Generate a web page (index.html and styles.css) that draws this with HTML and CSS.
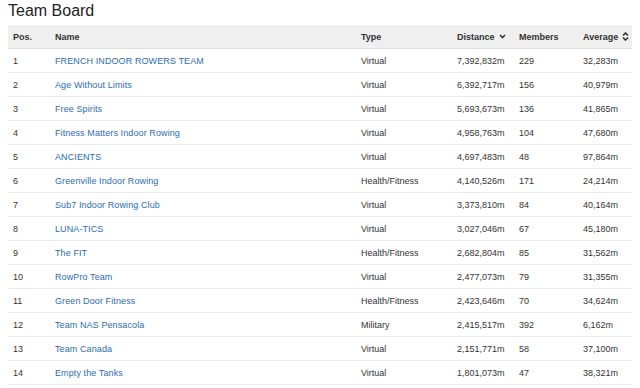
FILE: index.html
```html
<!DOCTYPE html>
<html>
<head>
<meta charset="utf-8">
<link rel="stylesheet" href="styles.css">
</head>
<body>
<h1 class="title">Team Board</h1>
<div class="board">
  <div class="row head">
    <div class="cell">Pos.</div>
    <div class="cell">Name</div>
    <div class="cell">Type</div>
    <div class="cell">Distance <svg class="ico" width="7" height="5" viewBox="0 0 7 5"><path d="M1 1 L3.5 3.5 L6 1" fill="none" stroke="#333" stroke-width="1.6"/></svg></div>
    <div class="cell">Members</div>
    <div class="cell">Average <svg class="ico" width="7" height="9" viewBox="0 0 7 9"><path d="M1 3.5 L3.5 1 L6 3.5 M1 5.5 L3.5 8 L6 5.5" fill="none" stroke="#333" stroke-width="1.6"/></svg></div>
  </div>
  <div class="row"><div class="cell">1</div><div class="cell"><a class="link">FRENCH INDOOR ROWERS TEAM</a></div><div class="cell">Virtual</div><div class="cell">7,392,832m</div><div class="cell">229</div><div class="cell">32,283m</div></div>
  <div class="row"><div class="cell">2</div><div class="cell"><a class="link">Age Without Limits</a></div><div class="cell">Virtual</div><div class="cell">6,392,717m</div><div class="cell">156</div><div class="cell">40,979m</div></div>
  <div class="row"><div class="cell">3</div><div class="cell"><a class="link">Free Spirits</a></div><div class="cell">Virtual</div><div class="cell">5,693,673m</div><div class="cell">136</div><div class="cell">41,865m</div></div>
  <div class="row"><div class="cell">4</div><div class="cell"><a class="link">Fitness Matters Indoor Rowing</a></div><div class="cell">Virtual</div><div class="cell">4,958,763m</div><div class="cell">104</div><div class="cell">47,680m</div></div>
  <div class="row"><div class="cell">5</div><div class="cell"><a class="link">ANCIENTS</a></div><div class="cell">Virtual</div><div class="cell">4,697,483m</div><div class="cell">48</div><div class="cell">97,864m</div></div>
  <div class="row"><div class="cell">6</div><div class="cell"><a class="link">Greenville Indoor Rowing</a></div><div class="cell">Health/Fitness</div><div class="cell">4,140,526m</div><div class="cell">171</div><div class="cell">24,214m</div></div>
  <div class="row"><div class="cell">7</div><div class="cell"><a class="link">Sub7 Indoor Rowing Club</a></div><div class="cell">Virtual</div><div class="cell">3,373,810m</div><div class="cell">84</div><div class="cell">40,164m</div></div>
  <div class="row"><div class="cell">8</div><div class="cell"><a class="link">LUNA-TICS</a></div><div class="cell">Virtual</div><div class="cell">3,027,046m</div><div class="cell">67</div><div class="cell">45,180m</div></div>
  <div class="row"><div class="cell">9</div><div class="cell"><a class="link">The FIT</a></div><div class="cell">Health/Fitness</div><div class="cell">2,682,804m</div><div class="cell">85</div><div class="cell">31,562m</div></div>
  <div class="row"><div class="cell">10</div><div class="cell"><a class="link">RowPro Team</a></div><div class="cell">Virtual</div><div class="cell">2,477,073m</div><div class="cell">79</div><div class="cell">31,355m</div></div>
  <div class="row"><div class="cell">11</div><div class="cell"><a class="link">Green Door Fitness</a></div><div class="cell">Health/Fitness</div><div class="cell">2,423,646m</div><div class="cell">70</div><div class="cell">34,624m</div></div>
  <div class="row"><div class="cell">12</div><div class="cell"><a class="link">Team NAS Pensacola</a></div><div class="cell">Military</div><div class="cell">2,415,517m</div><div class="cell">392</div><div class="cell">6,162m</div></div>
  <div class="row"><div class="cell">13</div><div class="cell"><a class="link">Team Canada</a></div><div class="cell">Virtual</div><div class="cell">2,151,771m</div><div class="cell">58</div><div class="cell">37,100m</div></div>
  <div class="row"><div class="cell">14</div><div class="cell"><a class="link">Empty the Tanks</a></div><div class="cell">Virtual</div><div class="cell">1,801,073m</div><div class="cell">47</div><div class="cell">38,321m</div></div>
</div>
</body>
</html>
```
FILE: styles.css
```css
body {
  margin: 0 8px;
  font-family: "Liberation Sans", Arial, sans-serif;
  color: #333;
  background: #fff;
}
.title {
  margin: 0;
  height: 25px;
  font-size: 16px;
  font-weight: normal;
  line-height: 22px;
  color: #222;
}
.board {
  width: 624px;
  font-size: 9px;
}
.row {
  display: grid;
  grid-template-columns: 42px 306px 96px 62px 64px 54px;
  height: 22px;
  align-items: center;
  padding-top: 1px;
  border-bottom: 1px solid #ececec;
}
.row.head {
  background: #efefef;
  border-bottom: 1px solid #dcdcdc;
  height: 23px;
  padding-top: 0;
  font-weight: bold;
  color: #333;
}
.cell {
  padding-left: 5px;
  white-space: nowrap;
  display: flex;
  align-items: center;
  gap: 4px;
}
.link {
  color: #2a6db0;
  text-decoration: none;
  letter-spacing: 0.1px;
}
.ico {
  display: block;
}
```
